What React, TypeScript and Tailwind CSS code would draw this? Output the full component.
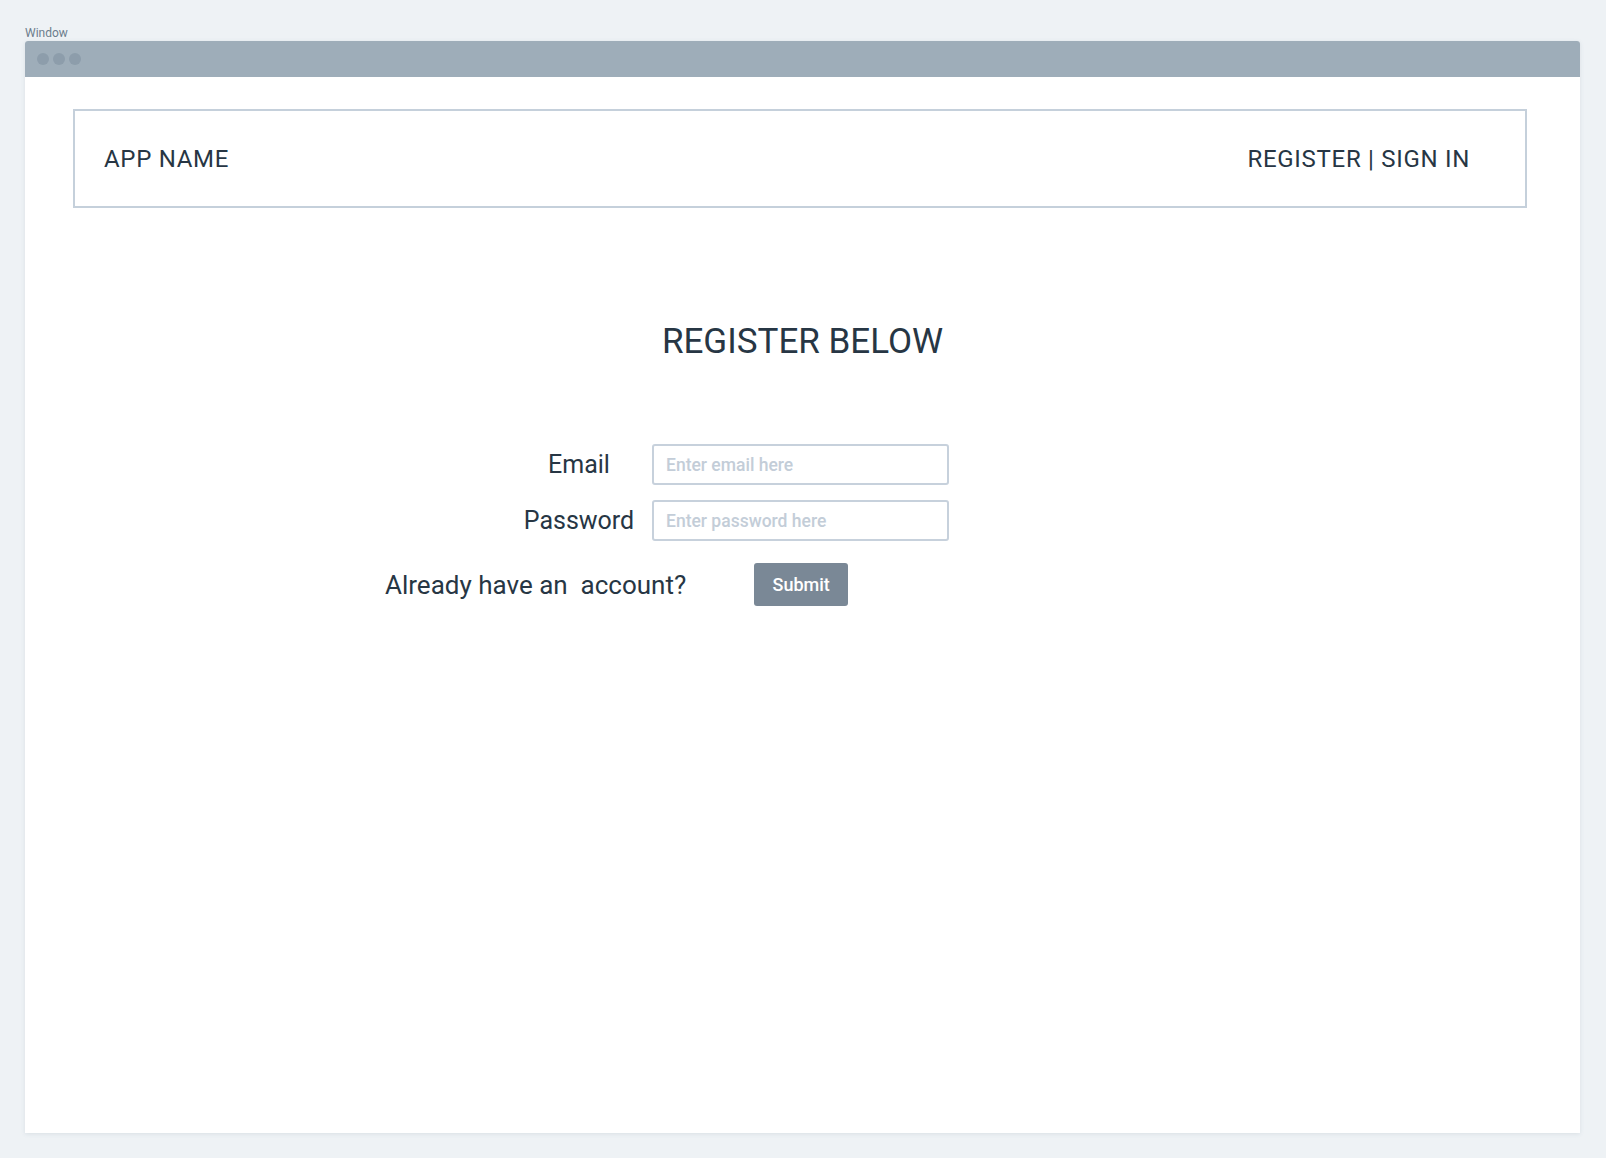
const font = "font-['Roboto','Liberation_Sans',sans-serif]";

const FormRow = ({ label, placeholder, type }: { label: string; placeholder: string; type: string }) => (
  <div className="flex items-center gap-[8px]">
    <label className="w-[130px] text-center text-[25px] leading-[30px] text-[#273644]">{label}</label>
    <input
      type={type}
      placeholder={placeholder}
      className="h-[41px] w-[297px] rounded-[3px] border-2 border-[#c7d1dc] bg-white px-[12px] text-[17.5px] font-medium text-[#273644] outline-none placeholder:text-[#c3cdd8]"
    />
  </div>
);

export default function App() {
  return (
    <div className={`min-h-screen bg-[#eef2f5] px-[25px] pt-[26px] ${font}`}>
      <div className="text-[12px] leading-[15px] text-[#6c7d8c]">Window</div>
      <div className="w-[1555px] rounded-t-[3px] bg-white shadow-[0_1px_4px_rgba(100,120,140,0.15)]">
        {/* title bar */}
        <div className="flex h-[36px] items-center gap-[4px] rounded-t-[3px] bg-[#9eadb9] pl-[12px]">
          <span className="h-[12px] w-[12px] rounded-full bg-[#8d9dab]" />
          <span className="h-[12px] w-[12px] rounded-full bg-[#8d9dab]" />
          <span className="h-[12px] w-[12px] rounded-full bg-[#8d9dab]" />
        </div>

        <div className="h-[1056px] pt-[32px]">
          {/* header */}
          <header className="ml-[48px] flex h-[99px] w-[1454px] items-center justify-between border-2 border-[#c5d0db] pt-[1px] pl-[29px] pr-[55px] text-[24px] tracking-[0.7px] text-[#273644]">
            <span>APP NAME</span>
            <nav>REGISTER | SIGN IN</nav>
          </header>

          <h1 className="mt-[114px] text-center text-[35px] leading-[40px] text-[#273644]">REGISTER BELOW</h1>

          {/* form */}
          <div className="mt-[82px] ml-[489px] flex flex-col gap-[15px]">
            <FormRow label="Email" placeholder="Enter email here" type="email" />
            <FormRow label="Password" placeholder="Enter password here" type="password" />
          </div>

          <div className="mt-[22px] ml-[360px] flex items-center gap-[68px]">
            <span className="whitespace-pre text-[26px] leading-[30px] text-[#273644]">Already have an  account?</span>
            <button className="h-[43px] w-[94px] rounded-[3px] bg-[#7a8896] text-[18px] font-medium text-white">
              Submit
            </button>
          </div>
        </div>
      </div>
    </div>
  );
}
